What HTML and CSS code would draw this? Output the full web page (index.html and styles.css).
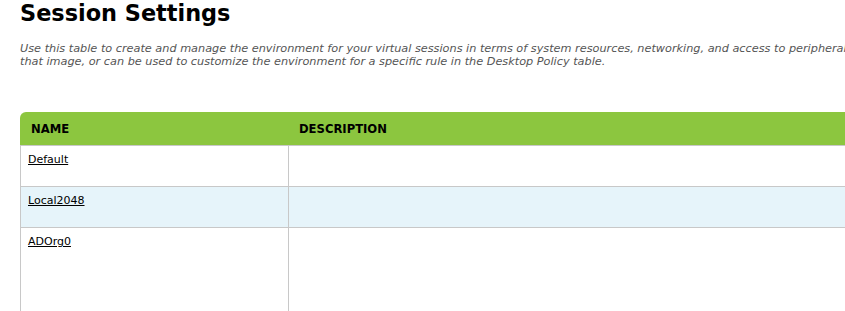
FILE: index.html
```html
<!DOCTYPE html>
<html lang="en">
<head>
    <meta charset="UTF-8">
    <title>Session Settings</title>
    <link rel="stylesheet" href="styles.css">
</head>
<body>
    <div class="page">
        <h1>Session Settings</h1>
        <p class="intro">Use this table to create and manage the environment for your virtual sessions in terms of system resources, networking, and access to peripheral devices. A session setting can be assigned to an image, where it applies to all sessions launched from<br>that image, or can be used to customize the environment for a specific rule in the Desktop Policy table.</p>

        <table class="grid">
            <thead>
                <tr>
                    <th class="col-name">NAME</th>
                    <th>DESCRIPTION</th>
                </tr>
            </thead>
            <tbody>
                <tr>
                    <td><a href="#">Default</a></td>
                    <td></td>
                </tr>
                <tr class="alt">
                    <td><a href="#">Local2048</a></td>
                    <td></td>
                </tr>
                <tr class="tall">
                    <td><a href="#">ADOrg0</a></td>
                    <td></td>
                </tr>
            </tbody>
        </table>
    </div>
</body>
</html>
```

FILE: styles.css
```css
html, body {
    margin: 0;
    overflow: hidden;
}
body {
    font-family: "DejaVu Sans", Verdana, sans-serif;
    color: #000;
    background: #fff;
}
.page {
    width: 1700px;
    padding: 0 20px;
}
h1 {
    font-size: 22.4px;
    font-weight: bold;
    margin: 0;
    line-height: 26px;
}
.intro {
    font-size: 11.27px;
    font-style: italic;
    color: #555;
    line-height: 13px;
    margin: 16px 0 0;
    white-space: nowrap;
}
.grid {
    margin-top: 44px;
    width: 1000px;
    border-collapse: separate;
    border-spacing: 0;
    font-size: 11px;
}
.grid th {
    background: #8cc63f;
    text-align: left;
    font-weight: bold;
    font-size: 11.6px;
    height: 34px;
    padding: 0 0 0 11px;
    box-sizing: border-box;
    border-bottom: 1px solid #c8c8c8;
}
.grid th.col-name {
    border-top-left-radius: 6px;
    width: 268px;
}
.grid td {
    height: 41px;
    box-sizing: border-box;
    vertical-align: top;
    padding: 7px 0 0 7px;
    border-bottom: 1px solid #c8c8c8;
    border-left: 1px solid #c8c8c8;
}
.grid tr.alt td {
    background: #e6f4fa;
}
.grid tr.tall td {
    height: 100px;
}
.grid a {
    color: #000;
    text-decoration: underline;
}
```
